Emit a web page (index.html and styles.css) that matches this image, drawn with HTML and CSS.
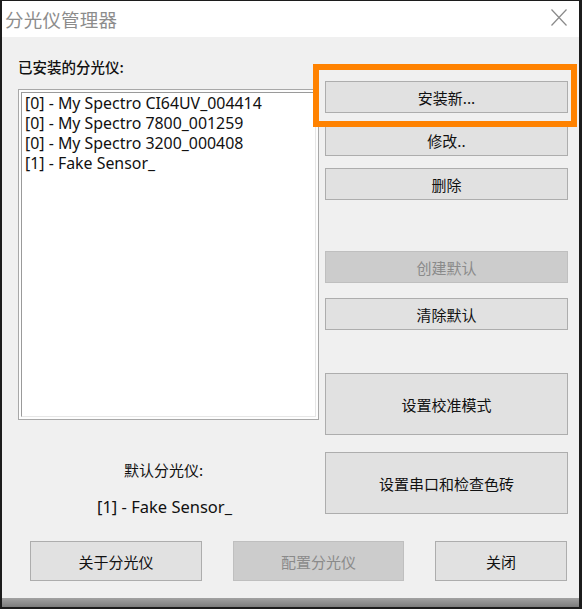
FILE: index.html
```html
<!DOCTYPE html>
<html lang="zh-CN">
<head>
<meta charset="utf-8">
<title>分光仪管理器</title>
<link rel="stylesheet" href="styles.css">
</head>
<body>
<div class="window">
  <div class="titlebar">
    <span class="title">分光仪管理器</span>
    <svg class="close" width="16" height="17" viewBox="0 0 16 17"><path d="M0.5 0.5 L15.5 16.5 M15.5 0.5 L0.5 16.5" stroke="#8a8a8a" stroke-width="1.2" fill="none"/></svg>
  </div>
  <div class="main">
    <div class="left">
      <div class="label">已安装的分光仪:</div>
      <div class="listbox">
        <div class="listinner">
          <div class="item">[0] - My Spectro CI64UV_004414</div>
          <div class="item">[0] - My Spectro 7800_001259</div>
          <div class="item">[0] - My Spectro 3200_000408</div>
          <div class="item">[1] - Fake Sensor_</div>
        </div>
      </div>
      <div class="deflabel">默认分光仪:</div>
      <div class="defname">[1] - Fake Sensor_</div>
    </div>
    <div class="right">
      <button class="btn b-install">安装新...</button>
      <button class="btn b-edit">修改..</button>
      <button class="btn b-del">删除</button>
      <button class="btn b-create disabled">创建默认</button>
      <button class="btn b-clear">清除默认</button>
      <button class="btn tall b-calib">设置校准模式</button>
      <button class="btn tall b-serial">设置串口和检查色砖</button>
      <div class="highlight"></div>
    </div>
  </div>
  <div class="bottom">
    <button class="btn b-about">关于分光仪</button>
    <button class="btn b-config disabled">配置分光仪</button>
    <button class="btn b-close">关闭</button>
  </div>
  <div class="spacer"></div>
  <div class="band"></div>
</div>
</body>
</html>
```
FILE: styles.css
```css
* { box-sizing: border-box; }
html, body { margin: 0; padding: 0; background: #f0f0f0; }
body { font-family: "Noto Sans", "Noto Sans CJK SC", sans-serif; }

.window {
  width: 582px;
  height: 609px;
  border: 2px solid #1c1c1c;
  border-top-width: 1px;
  border-right-width: 3px;
  background: #f0f0f0;
  display: flex;
  flex-direction: column;
}

.titlebar {
  height: 36px;
  flex: none;
  background: #ffffff;
  display: flex;
  align-items: center;
  justify-content: space-between;
  padding: 0 12px 0 3px;
}
.title {
  font-family: "Noto Sans CJK SC", sans-serif;
  font-size: 18.5px;
  color: #8c8c8c;
  letter-spacing: 0.2px;
}
.close { display: block; margin-top: -3px; }

.main {
  height: 504px;
  flex: none;
  display: flex;
  padding-left: 16px;
  gap: 6px;
}
.left {
  width: 301px;
  display: flex;
  flex-direction: column;
}
.label {
  margin-top: 20px;
  height: 20px;
  line-height: 20px;
  font-family: "Noto Sans CJK SC", sans-serif;
  font-size: 14.5px;
  font-weight: 500;
  color: #111;
}
.listbox {
  margin-top: 12px;
  height: 331px;
  border: 1px solid #a8a8a8;
  padding: 2px;
  background: #fdfdfd;
}
.listinner {
  height: 100%;
  border: 1px solid #9a9a9a;
  border-right-color: #e6e6e6;
  border-bottom-color: #e6e6e6;
  background: #fff;
  padding: 0 0 0 3px;
}
.item {
  height: 20px;
  line-height: 20px;
  font-size: 15.9px;
  color: #111;
  white-space: nowrap;
}
.deflabel, .defname {
  height: 20px;
  line-height: 20px;
  text-align: center;
  padding-right: 10px;
  color: #111;
}
.deflabel {
  margin-top: 40px;
  font-family: "Noto Sans CJK SC", sans-serif;
  font-size: 15px;
}
.defname { margin-top: 17px; font-size: 16.5px; padding-right: 8px; }

.right {
  position: relative;
  width: 243px;
  display: flex;
  flex-direction: column;
}
.btn {
  display: block;
  width: 100%;
  height: 32px;
  background: #e1e1e1;
  border: 1px solid #adadad;
  border-radius: 0;
  padding: 0;
  margin: 0;
  font-family: "Noto Sans CJK SC", sans-serif;
  font-size: 15px;
  color: #111;
}
.btn.disabled {
  background: #cccccc;
  border-color: #bfbfbf;
  color: #8a8a8a;
}
.btn.tall { height: 62px; }
.b-install { margin-top: 44px; }
.b-edit { margin-top: 12px; height: 31px; }
.b-del { margin-top: 12px; }
.b-create { margin-top: 51px; }
.b-clear { margin-top: 15px; }
.b-calib { margin-top: 43px; height: 63px; }
.b-serial { margin-top: 17px; }

.highlight {
  position: absolute;
  left: -12px;
  top: 27px;
  width: 264px;
  height: 63px;
  border: 6px solid #ff8200;
  pointer-events: none;
}

.bottom {
  height: 40px;
  flex: none;
  display: flex;
  padding-left: 28px;
  gap: 31px;
}
.bottom .btn { height: 40px; }
.b-about { width: 172px; }
.b-config { width: 171px; }
.b-close { width: 132px; }

.spacer { height: 17px; flex: none; }
.band {
  flex: 1;
  background: linear-gradient(#a2a2a2, #7c7c7c);
}
```
